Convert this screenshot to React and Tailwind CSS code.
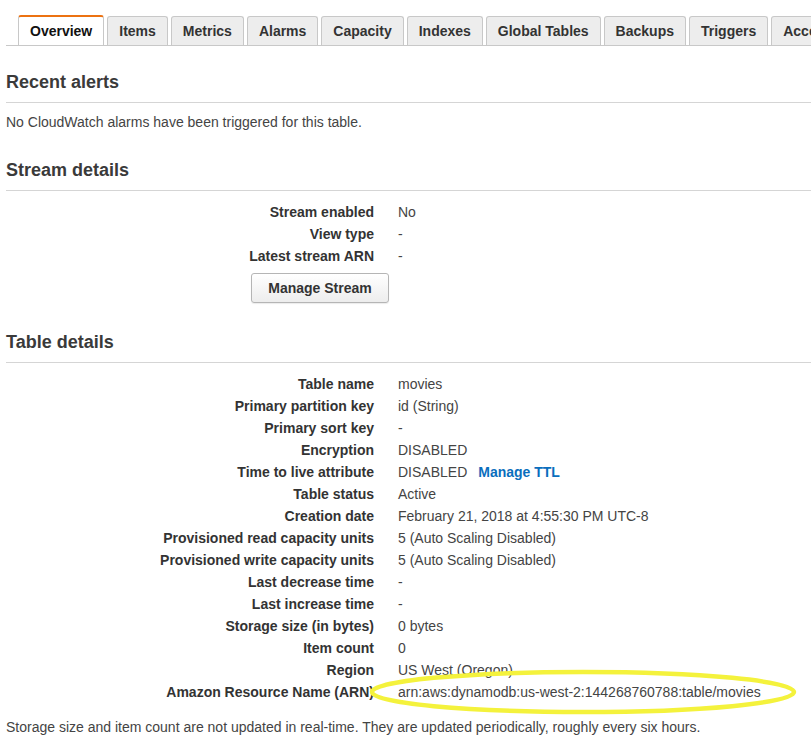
import React from "react";

const tabs = ["Overview", "Items", "Metrics", "Alarms", "Capacity", "Indexes", "Global Tables", "Backups", "Triggers", "Access control"];

const tableRows = [
  ["Table name", "movies"],
  ["Primary partition key", "id (String)"],
  ["Primary sort key", "-"],
  ["Encryption", "DISABLED"],
  ["Time to live attribute", "TTL"],
  ["Table status", "Active"],
  ["Creation date", "February 21, 2018 at 4:55:30 PM UTC-8"],
  ["Provisioned read capacity units", "5 (Auto Scaling Disabled)"],
  ["Provisioned write capacity units", "5 (Auto Scaling Disabled)"],
  ["Last decrease time", "-"],
  ["Last increase time", "-"],
  ["Storage size (in bytes)", "0 bytes"],
  ["Item count", "0"],
  ["Region", "US West (Oregon)"],
  ["Amazon Resource Name (ARN)", "arn:aws:dynamodb:us-west-2:144268760788:table/movies"],
];

const streamRows = [
  ["Stream enabled", "No"],
  ["View type", "-"],
  ["Latest stream ARN", "-"],
];

function Rows({ rows }) {
  return (
    <div className="grid grid-cols-[368px_1fr] gap-x-6">
      {rows.map(([k, v]) => (
        <React.Fragment key={k}>
          <div className="text-right font-bold text-[#333] leading-[22px] whitespace-nowrap">{k}</div>
          <div className="text-[#444] leading-[22px] whitespace-nowrap">
            {v === "TTL" ? (
              <>
                DISABLED
                <span className="ml-[11px] font-bold text-[#0a6ebd]">Manage TTL</span>
              </>
            ) : (
              v
            )}
          </div>
        </React.Fragment>
      ))}
    </div>
  );
}

function Heading({ children, className = "" }) {
  return (
    <div className={"border-b border-[#d5d5d5] pb-[9px] " + className}>
      <h2 className="text-[18px] leading-[22px] font-bold text-[#3a3a3a]">{children}</h2>
    </div>
  );
}

export default function App() {
  return (
    <div
      className="relative w-[811px] h-[756px] overflow-hidden bg-white text-[14px]"
      style={{ fontFamily: '"Liberation Sans", Arial, sans-serif' }}
    >
      <div className="pl-[6px] pt-[15px]">
        <div className="flex items-end gap-[3px] border-b border-[#c8c8c8] pl-[12px] whitespace-nowrap overflow-hidden">
          {tabs.map((t, i) =>
            i === 0 ? (
              <div
                key={t}
                className="-mb-px h-[31px] px-[11px] flex items-center bg-white border-x border-[#c8c8c8] border-t-2 border-t-[#ec7211] rounded-t-[3px] font-bold text-[#111] shrink-0"
              >
                {t}
              </div>
            ) : (
              <div
                key={t}
                className="h-[29px] px-[11px] flex items-center bg-[#ededed] border border-b-0 border-[#c8c8c8] rounded-t-[3px] font-bold text-[#333] shrink-0"
              >
                {t}
              </div>
            )
          )}
        </div>

        <Heading className="mt-[25px]">Recent alerts</Heading>
        <p className="mt-[9px] leading-[20px] text-[#444]">No CloudWatch alarms have been triggered for this table.</p>

        <Heading className="mt-[27px]">Stream details</Heading>
        <div className="mt-[10px]">
          <Rows rows={streamRows} />
        </div>
        <button className="mt-[6px] ml-[245px] h-[30px] w-[138px] rounded-[3px] border border-[#b5b5b5] bg-gradient-to-b from-white to-[#ededed] font-bold text-[#333] shadow-[0_1px_1px_rgba(0,0,0,0.08)]">
          Manage Stream
        </button>

        <Heading className="mt-[28px]">Table details</Heading>
        <div className="mt-[10px]">
          <Rows rows={tableRows} />
        </div>
        <p className="mt-[14px] leading-[20px] text-[#444] whitespace-nowrap">
          Storage size and item count are not updated in real-time. They are updated periodically, roughly every six hours.
        </p>
      </div>

      <svg className="absolute left-[366px] top-[667px]" width="436" height="50" viewBox="0 0 436 50">
        <ellipse cx="217" cy="25" rx="211" ry="20" fill="none" stroke="#f4f23c" strokeWidth="4.5" />
      </svg>
    </div>
  );
}
